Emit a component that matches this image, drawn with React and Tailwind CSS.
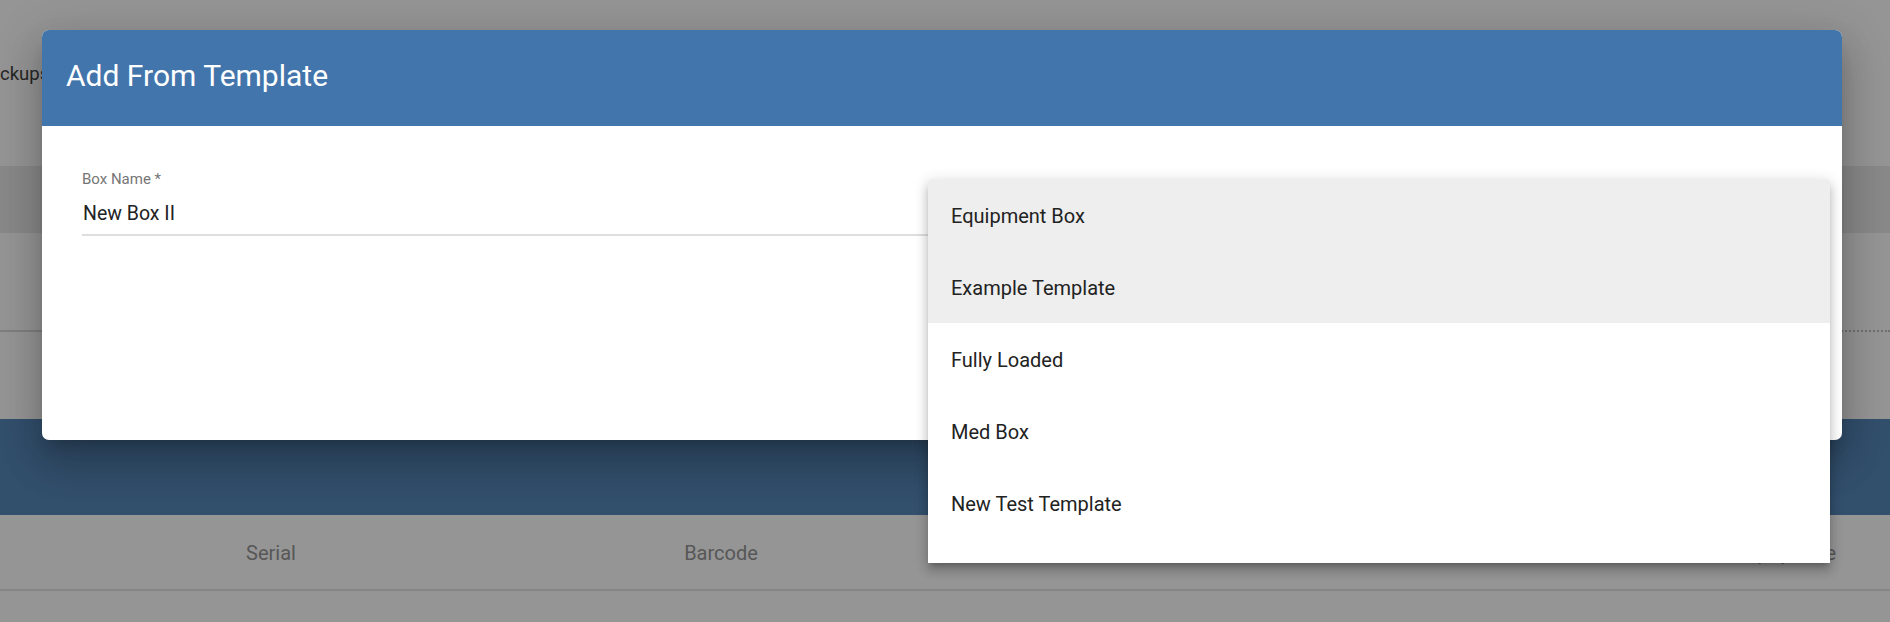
import React from 'react';

const templates = ['Equipment Box', 'Example Template', 'Fully Loaded', 'Med Box', 'New Test Template'];

// rows that show the grey hover / selected tint
const tinted = [0, 1];

const App = () => {
  return (
    <div className="relative h-[622px] w-full overflow-hidden bg-[#959595] font-['Roboto','Liberation_Sans',sans-serif]">
      {/* PAGE BEHIND THE BACKDROP */}
      <div className="h-[166px] pt-[63px] text-[18.5px] leading-[22px] text-[#272727]">ckups</div>
      <div className="h-[67px] bg-[#898989]" />
      <div className="flex h-[99px]">
        <div className="flex-1 border-b-2 border-[#7f7f7f]" />
        <div className="w-[120px] border-b-2 border-dotted border-[#6f6f6f]" />
      </div>
      <div className="h-[87px]" />
      <div className="h-[96px] bg-[#324f6c]" />
      <div className="grid h-[76px] grid-cols-[542px_358px_1fr] items-center border-b-2 border-[#858585] pt-[2px] text-[20px] text-[#575757]">
        <span className="text-center">Serial</span>
        <span className="text-center">Barcode</span>
        <span className="pr-[54px] text-right">Expiry Date</span>
      </div>

      {/* DIALOG */}
      <div className="absolute left-[42px] top-[30px] h-[410px] w-[1800px] overflow-hidden rounded-[7px] bg-white shadow-[0px_11px_15px_-7px_rgba(0,0,0,0.2),0px_24px_38px_3px_rgba(0,0,0,0.14),0px_9px_46px_8px_rgba(0,0,0,0.12)]">
        <div className="flex h-[96px] items-center bg-[#4275ab] px-[24px] pb-[5px]">
          <h2 className="text-[30px] leading-[36px] font-normal text-white">Add From Template</h2>
        </div>
        <div className="px-[40px] pt-[44px]">
          <div className="w-[846px] border-b-2 border-[#dedede] pb-[9px]">
            <label className="block text-[15px] leading-[18px] text-[#767676]">Box Name *</label>
            <div className="mt-[14px] pl-[1px] text-[19.5px] leading-[23px] text-[#222222]">New Box II</div>
          </div>
        </div>
      </div>

      {/* SELECT MENU */}
      <div className="absolute left-[928px] top-[179px] h-[384px] w-[902px] overflow-hidden rounded-t-[4px] bg-white shadow-[0px_5px_5px_-3px_rgba(0,0,0,0.2),0px_8px_10px_1px_rgba(0,0,0,0.14),0px_3px_14px_2px_rgba(0,0,0,0.12)]">
        {templates.map((name, i) => (
          <div
            key={name}
            className={`flex h-[72px] items-center pl-[23px] pt-[2px] text-[20px] leading-[24px] text-[#222222] ${tinted.includes(i) ? 'bg-[#eeeeee]' : 'bg-white'}`}
          >
            {name}
          </div>
        ))}
      </div>
    </div>
  );
};

export default App;
